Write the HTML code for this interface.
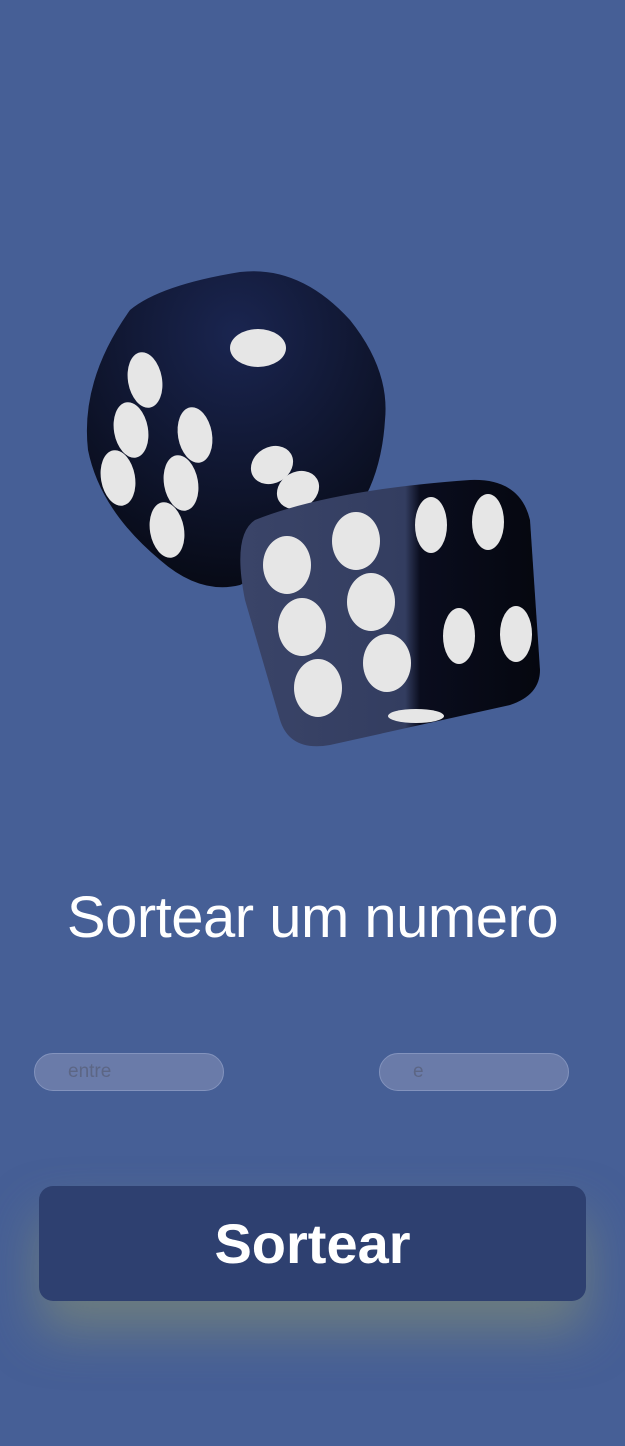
<!DOCTYPE html>
<html><head><style>
html,body{margin:0;padding:0}
body{width:625px;height:1446px;background:#465f96;position:relative;overflow:hidden;font-family:"Liberation Sans",sans-serif}
h1{position:absolute;top:884px;left:0;width:625px;text-align:center;margin:0;font-weight:400;font-size:58px;color:#fff;letter-spacing:-0.5px}
.inp{position:absolute;top:1053px;width:190px;height:38px;border-radius:19px;background:#6a7ba9;border:1px solid #8393bd;box-sizing:border-box;color:#5c6685;font-size:19px;line-height:36px}
.btn{position:absolute;left:39px;top:1186px;width:547px;height:115px;border-radius:14px;background:#2e4070;color:#fff;font-weight:700;font-size:56px;text-align:center;line-height:115px;box-shadow:0 30px 50px rgba(140,150,110,.55)}
</style></head><body>
<svg width="625" height="800" style="position:absolute;left:0;top:0">
<defs>
<radialGradient id="g1" cx="0.5" cy="0.2" r="0.9"><stop offset="0" stop-color="#1a2550"/><stop offset="1" stop-color="#05070f"/></radialGradient>
<linearGradient id="g2" x1="0" y1="0" x2="1" y2="0"><stop offset="0" stop-color="#3a4468"/><stop offset="0.55" stop-color="#333d60"/><stop offset="0.6" stop-color="#0a0d1e"/><stop offset="1" stop-color="#05070f"/></linearGradient>
</defs>
<path d="M130 310 Q160 285 240 272 Q300 265 350 320 Q390 370 385 420 Q380 500 330 540 L240 585 Q200 595 160 560 Q100 510 88 450 Q80 380 130 310Z" fill="url(#g1)"/>
<g fill="#e6e6e6">
<ellipse cx="258" cy="348" rx="28" ry="19"/>
<ellipse cx="145" cy="380" rx="17" ry="28" transform="rotate(-10 145 380)"/>
<ellipse cx="131" cy="430" rx="17" ry="28" transform="rotate(-10 131 430)"/>
<ellipse cx="118" cy="478" rx="17" ry="28" transform="rotate(-10 118 478)"/>
<ellipse cx="195" cy="435" rx="17" ry="28" transform="rotate(-10 195 435)"/>
<ellipse cx="181" cy="483" rx="17" ry="28" transform="rotate(-10 181 483)"/>
<ellipse cx="167" cy="530" rx="17" ry="28" transform="rotate(-10 167 530)"/>
<ellipse cx="272" cy="465" rx="22" ry="18" transform="rotate(-30 272 465)"/>
<ellipse cx="298" cy="490" rx="22" ry="18" transform="rotate(-30 298 490)"/>
</g>
<path d="M255 520 Q330 490 470 480 Q520 478 530 520 L540 670 Q540 695 510 705 L330 745 Q290 752 280 720 L245 600 Q232 535 255 520Z" fill="url(#g2)"/>
<g fill="#e6e6e6">
<ellipse cx="287" cy="565" rx="24" ry="29"/>
<ellipse cx="302" cy="627" rx="24" ry="29"/>
<ellipse cx="318" cy="688" rx="24" ry="29"/>
<ellipse cx="356" cy="541" rx="24" ry="29"/>
<ellipse cx="371" cy="602" rx="24" ry="29"/>
<ellipse cx="387" cy="663" rx="24" ry="29"/>
<ellipse cx="431" cy="525" rx="16" ry="28"/>
<ellipse cx="488" cy="522" rx="16" ry="28"/>
<ellipse cx="459" cy="636" rx="16" ry="28"/>
<ellipse cx="516" cy="634" rx="16" ry="28"/>
<ellipse cx="416" cy="716" rx="28" ry="7"/>
</g>
</svg>
<h1>Sortear um numero</h1>
<div class="inp" style="left:34px;padding-left:33px">entre</div>
<div class="inp" style="left:379px;padding-left:33px">e</div>
<div class="btn">Sortear</div>
</body></html>
